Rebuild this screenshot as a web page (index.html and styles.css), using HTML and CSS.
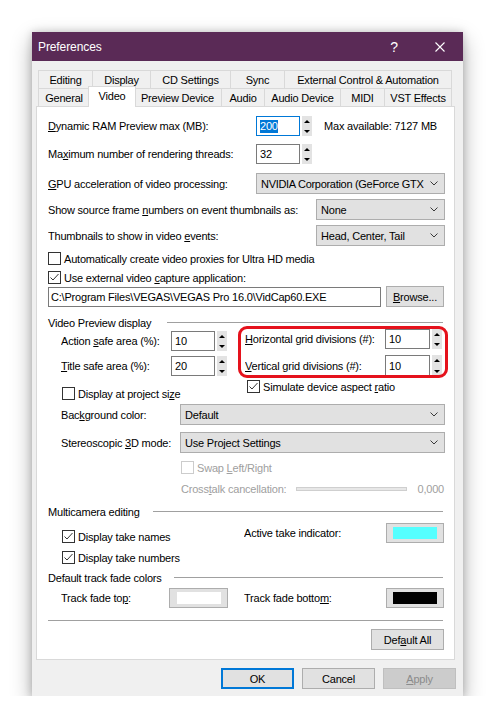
FILE: index.html
```html
<!DOCTYPE html>
<html>
<head>
<meta charset="utf-8">
<title>Preferences</title>
<link rel="stylesheet" href="styles.css">
</head>
<body>
<div class="stage">
  <div class="window">
    <div class="titlebar">
      <span class="title">Preferences</span>
      <span class="tb-btn help">?</span>
      <span class="tb-btn close"><svg width="10" height="10" viewBox="0 0 10 10"><path d="M0.5 0.5L9.5 9.5M9.5 0.5L0.5 9.5" stroke="#fff" stroke-width="1.1" fill="none"/></svg></span>
    </div>

    <div class="tabs">
      <div class="tabrow">
        <div class="tab first t55">Editing</div>
        <div class="tab t58">Display</div>
        <div class="tab t80">CD Settings</div>
        <div class="tab t54">Sync</div>
        <div class="tab t167">External Control &amp; Automation</div>
      </div>
      <div class="tabrow">
        <div class="tab first t52">General</div>
        <div class="tab active t48">Video</div>
        <div class="tab t88">Preview Device</div>
        <div class="tab t43">Audio</div>
        <div class="tab t76">Audio Device</div>
        <div class="tab t44">MIDI</div>
        <div class="tab t67">VST Effects</div>
      </div>
    </div>

    <div class="panel">
      <div class="row h20 mt9">
        <span class="lbl w208"><u>D</u>ynamic RAM Preview max (MB):</span>
        <span class="num focus w44"><span class="sel">200</span></span>
        <span class="spin"><i class="up"></i><i class="dn"></i></span>
        <span class="note">Max available: 7127 MB</span>
      </div>
      <div class="row h20 mt8">
        <span class="lbl w208">Ma<u>x</u>imum number of rendering threads:</span>
        <span class="num w44">32</span>
        <span class="spin"><i class="up"></i><i class="dn"></i></span>
      </div>
      <div class="row h21 mt9">
        <span class="lbl w208"><u>G</u>PU acceleration of video processing:</span>
        <span class="dd grow"><span class="ddtxt tight">NVIDIA Corporation (GeForce GTX</span><svg class="chev" width="8" height="5" viewBox="0 0 8 5"><path d="M0.5 0.5L4 4L7.5 0.5" fill="none" stroke="#3a3a3a"/></svg></span>
      </div>
      <div class="row h21 mt5">
        <span class="lbl w268">Show source frame <u>n</u>umbers on event thumbnails as:</span>
        <span class="dd grow"><span class="ddtxt">None</span><svg class="chev" width="8" height="5" viewBox="0 0 8 5"><path d="M0.5 0.5L4 4L7.5 0.5" fill="none" stroke="#3a3a3a"/></svg></span>
      </div>
      <div class="row h21 mt5">
        <span class="lbl w268">Thumbnails to show in video <u>e</u>vents:</span>
        <span class="dd grow"><span class="ddtxt">Head, Center, Tail</span><svg class="chev" width="8" height="5" viewBox="0 0 8 5"><path d="M0.5 0.5L4 4L7.5 0.5" fill="none" stroke="#3a3a3a"/></svg></span>
      </div>
      <div class="row h13 mt6">
        <span class="cb"></span>
        <span class="cbtxt">Automatically create video proxies for Ultra HD media</span>
      </div>
      <div class="row h13 mt6">
        <span class="cb"><svg width="11" height="11" viewBox="0 0 11 11"><path d="M1.5 5.5L4 8L9.5 2" fill="none" stroke="#333" stroke-width="1"/></svg></span>
        <span class="cbtxt">Use external video <u>c</u>apture application:</span>
      </div>
      <div class="row h21 mt2">
        <span class="path w333">C:\Program Files\VEGAS\VEGAS Pro 16.0\VidCap60.EXE</span>
        <span class="btn browse"><u>B</u>rowse...</span>
      </div>

      <div class="row h13 mt9 grp">
        <span class="glbl w119">Video Preview display</span>
        <span class="gline"></span>
      </div>

      <div class="section">
        <div class="col left">
          <div class="row h20 mt2">
            <span class="lbl w110">Action <u>s</u>afe area (%):</span>
            <span class="num w44">10</span>
            <span class="spin"><i class="up"></i><i class="dn"></i></span>
          </div>
          <div class="row h20 mt5">
            <span class="lbl w110"><u>T</u>itle safe area (%):</span>
            <span class="num w44">20</span>
            <span class="spin"><i class="up"></i><i class="dn"></i></span>
          </div>
          <div class="row h13 mt11 ml1">
            <span class="cb"></span>
            <span class="cbtxt">Display at project si<u>z</u>e</span>
          </div>
        </div>
        <div class="col right">
          <div class="row h20">
            <span class="lbl w140"><u>H</u>orizontal grid divisions (#):</span>
            <span class="num w45">10</span>
            <span class="spin"><i class="up"></i><i class="dn"></i></span>
          </div>
          <div class="row h21 mt6">
            <span class="lbl w140"><u>V</u>ertical grid divisions (#):</span>
            <span class="num w45 h21">10</span>
            <span class="spin"><i class="up"></i><i class="dn"></i></span>
          </div>
          <div class="row h13 mt4 ml2">
            <span class="cb"><svg width="11" height="11" viewBox="0 0 11 11"><path d="M1.5 5.5L4 8L9.5 2" fill="none" stroke="#333" stroke-width="1"/></svg></span>
            <span class="cbtxt">Simulate device aspect <u>r</u>atio</span>
          </div>
        </div>
      </div>

      <div class="row h21 mt4 ind">
        <span class="lbl w119">Bac<u>k</u>ground color:</span>
        <span class="dd grow"><span class="ddtxt">Default</span><svg class="chev" width="8" height="5" viewBox="0 0 8 5"><path d="M0.5 0.5L4 4L7.5 0.5" fill="none" stroke="#3a3a3a"/></svg></span>
      </div>
      <div class="row h21 mt7 ind">
        <span class="lbl w119">Stereoscopic <u>3</u>D mode:</span>
        <span class="dd grow"><span class="ddtxt">Use Project Settings</span><svg class="chev" width="8" height="5" viewBox="0 0 8 5"><path d="M0.5 0.5L4 4L7.5 0.5" fill="none" stroke="#3a3a3a"/></svg></span>
      </div>
      <div class="row h13 mt8 ind3">
        <span class="cb disabled"></span>
        <span class="cbtxt dis">Swap <u>L</u>eft/Right</span>
      </div>
      <div class="row h14 mt8 ind3">
        <span class="lbl w115 dis">Cross<u>t</u>alk cancellation:</span>
        <span class="track"></span>
        <span class="val dis">0,000</span>
      </div>

      <div class="row h14 mt9 grp">
        <span class="glbl w105">Multicamera editing</span>
        <span class="gline"></span>
      </div>
      <div class="row h20 mt4 ind2">
        <span class="pair w182">
          <span class="cb"><svg width="11" height="11" viewBox="0 0 11 11"><path d="M1.5 5.5L4 8L9.5 2" fill="none" stroke="#333" stroke-width="1"/></svg></span>
          <span class="cbtxt">Display take names</span>
        </span>
        <span class="lbl w142">Active take indicator:</span>
        <span class="btn swatchbtn"><span class="swatch cyan"></span></span>
      </div>
      <div class="row h13 mt8 ind2">
        <span class="cb"><svg width="11" height="11" viewBox="0 0 11 11"><path d="M1.5 5.5L4 8L9.5 2" fill="none" stroke="#333" stroke-width="1"/></svg></span>
        <span class="cbtxt">Display take numbers</span>
      </div>

      <div class="row h14 mt7 grp">
        <span class="glbl w126">Default track fade colors</span>
        <span class="gline"></span>
      </div>
      <div class="row h20 mt3 ind">
        <span class="lbl w108">Track fade to<u>p</u>:</span>
        <span class="btn swatchbtn w59"><span class="swatch white"></span></span>
        <span class="gap16"></span>
        <span class="lbl w142">Track fade botto<u>m</u>:</span>
        <span class="btn swatchbtn"><span class="swatch black"></span></span>
      </div>

      <div class="sep mt12"></div>
      <div class="row h21 mt8 end">
        <span class="btn dflt">Def<u>a</u>ult All</span>
      </div>

      <div class="highlight"></div>
    </div>

    <div class="buttons">
      <span class="btn dlg ok">OK</span>
      <span class="btn dlg">Cancel</span>
      <span class="btn dlg off"><u>A</u>pply</span>
    </div>
  </div>
</div>
</body>
</html>
```

FILE: styles.css
```css
* { box-sizing: border-box; }
html, body { margin: 0; padding: 0; background: #ffffff; }
body {
  font-family: "Liberation Sans", Arial, sans-serif;
  font-size: 11px;
  letter-spacing: -0.2px;
  color: #000;
}
u { text-decoration: underline; text-underline-offset: 1px; }

.stage { padding: 32px 0 0 32px; }
.window {
  width: 431px;
  height: 664px;
  background: #f0f0f0;
  display: flex;
  flex-direction: column;
  box-shadow: 0 8px 20px rgba(0,0,0,0.32), 0 0 8px rgba(0,0,0,0.18);
}

/* title bar */
.titlebar {
  height: 29px;
  flex: none;
  background: #5a2a56;
  color: #fff;
  display: flex;
  align-items: center;
  padding-left: 6px;
  font-size: 12px;
  letter-spacing: -0.1px;
}
.title { flex: 1; }
.tb-btn { width: 46px; height: 29px; display: flex; align-items: center; justify-content: center; }
.help { font-size: 14px; }

/* tabs */
.tabs { margin: 9px 0 0 6px; flex: none; }
.tabrow { display: flex; height: 18px; align-items: flex-end; }
.tab {
  height: 18px;
  border-top: 1px solid #d9d9d9;
  border-right: 1px solid #d9d9d9;
  background: #f0f0f0;
  display: flex;
  align-items: center;
  justify-content: center;
  white-space: nowrap;
  flex: none;
  padding-top: 1px;
}
.tab.first { border-left: 1px solid #d9d9d9; }
.tab.active {
  position: relative;
  z-index: 2;
  height: 21px;
  margin: 0 -2px -1px -2px;
  background: #fff;
  border-left: 1px solid #d9d9d9;
  padding-top: 0;
  padding-bottom: 2px;
}
.t43 { width: 43px; } .t44 { width: 44px; } .t48 { width: 48px; } .t52 { width: 52px; }
.t54 { width: 54px; } .t55 { width: 55px; } .t58 { width: 58px; } .t67 { width: 67px; }
.t76 { width: 76px; } .t80 { width: 80px; } .t88 { width: 88px; } .t167 { width: 167px; }

/* panel */
.panel {
  position: relative;
  flex: none;
  margin-left: 4px;
  width: 419px;
  height: 554px;
  background: #fff;
  border: 1px solid #d9d9d9;
  padding: 0 9px 0 11px;
}
.row { display: flex; align-items: center; white-space: nowrap; }
.h13 { height: 13px; } .h14 { height: 14px; } .h20 { height: 20px; } .h21 { height: 21px; }
.mt2 { margin-top: 2px; } .mt3 { margin-top: 3px; } .mt4 { margin-top: 4px; } .mt5 { margin-top: 5px; }
.mt6 { margin-top: 6px; } .mt7 { margin-top: 7px; } .mt8 { margin-top: 8px; } .mt9 { margin-top: 9px; }
.mt11 { margin-top: 11px; } .mt12 { margin-top: 12px; }
.ml1 { margin-left: 1px; } .ml2 { margin-left: 2px; }
.ind { padding-left: 13px; }
.ind2 { padding-left: 14px; }
.ind3 { padding-left: 133px; }
.end { justify-content: flex-end; padding-right: 1px; }

.lbl { flex: none; overflow: hidden; }
.w105 { width: 105px; } .w108 { width: 108px; } .w110 { width: 110px; } .w115 { width: 115px; }
.w119 { width: 119px; } .w126 { width: 126px; } .w140 { width: 140px; } .w142 { width: 142px; }
.w182 { width: 182px; } .w208 { width: 208px; } .w268 { width: 268px; } .w333 { width: 333px; }
.w44 { width: 44px; } .w45 { width: 45px; } .w59 { width: 59px !important; }
.grow { flex: 1; min-width: 0; }
.dis { color: #a0a0a0; }

/* numeric input with spinner */
.num {
  flex: none;
  height: 20px;
  border: 1px solid #7a7a7a;
  background: #fff;
  display: flex;
  align-items: center;
  padding-left: 3px;
}
.num.h21 { height: 21px; }
.num.focus { border-color: #0078d7; }
.sel { background: #0078d7; color: #fff; line-height: 13px; }
.spin {
  flex: none;
  width: 10px;
  margin-left: 2px;
  align-self: stretch;
  background: #e3e3e3;
  display: flex;
  flex-direction: column;
  justify-content: space-between;
  align-items: center;
  padding: 4px 0 3px;
}
.spin i { display: block; width: 0; height: 0; border-left: 3px solid transparent; border-right: 3px solid transparent; }
.spin .up { border-bottom: 3px solid #000; }
.spin .dn { border-top: 3px solid #000; }
.note { margin-left: 12px; }

/* dropdown */
.dd {
  height: 21px;
  background: #e1e1e1;
  border: 1px solid #adadad;
  display: flex;
  align-items: center;
  padding: 0 6px 0 4px;
}
.ddtxt { flex: 1; white-space: nowrap; }
.ddtxt.tight { letter-spacing: -0.3px; }
.chev { flex: none; margin-left: 3px; }

/* checkbox */
.cb {
  flex: none;
  width: 13px;
  height: 13px;
  border: 1px solid #333;
  background: #fff;
  display: flex;
  align-items: center;
  justify-content: center;
}
.cb.disabled { border-color: #cccccc; }
.cbtxt { margin-left: 3px; }
.pair { display: flex; align-items: center; align-self: flex-start; margin-top: 7px; flex: none; }

/* path / buttons */
.path {
  flex: none;
  height: 20px;
  border: 1px solid #7a7a7a;
  background: #fff;
  display: flex;
  align-items: center;
  padding-left: 2px;
}
.btn {
  flex: none;
  height: 21px;
  border: 1px solid #adadad;
  background: #e1e1e1;
  display: flex;
  align-items: center;
  justify-content: center;
}
.browse { width: 58px; margin-left: 5px; }
.dflt { width: 73px; }
.swatchbtn { width: 58px; height: 20px; }
.swatch { width: 44px; height: 12px; }
.cyan { background: #55ffff; }
.white { background: #ffffff; }
.black { background: #000000; }
.gap16 { width: 16px; flex: none; }

/* group headers */
.glbl { flex: none; }
.gline { flex: 1; height: 1px; background: #a0a0a0; margin-right: 2px; margin-top: -1px; }
.sep { height: 1px; background: #a0a0a0; margin-right: 2px; }

/* grid section */
.section { display: flex; align-items: flex-start; }
.col.left { width: 197px; padding-left: 13px; flex: none; }
.col.right { flex: none; }

/* crosstalk slider */
.track { flex: none; width: 111px; height: 4px; background: #e7e7e7; border: 1px solid #cfcfcf; }
.val { flex: 1; text-align: right; padding-right: 1px; }

/* highlight overlay */
.highlight {
  position: absolute;
  left: 201px;
  top: 219px;
  width: 210px;
  height: 52px;
  border: 3px solid #e5121c;
  border-radius: 9px;
  pointer-events: none;
}

/* dialog buttons */
.buttons {
  flex: none;
  display: flex;
  justify-content: flex-end;
  gap: 8px;
  margin-top: 8px;
  padding-right: 7px;
}
.dlg { width: 73px; height: 21px; }
.ok { border: 2px solid #0078d7; }
.off { background: #cccccc; border-color: #bfbfbf; color: #8b8b8b; }
```
